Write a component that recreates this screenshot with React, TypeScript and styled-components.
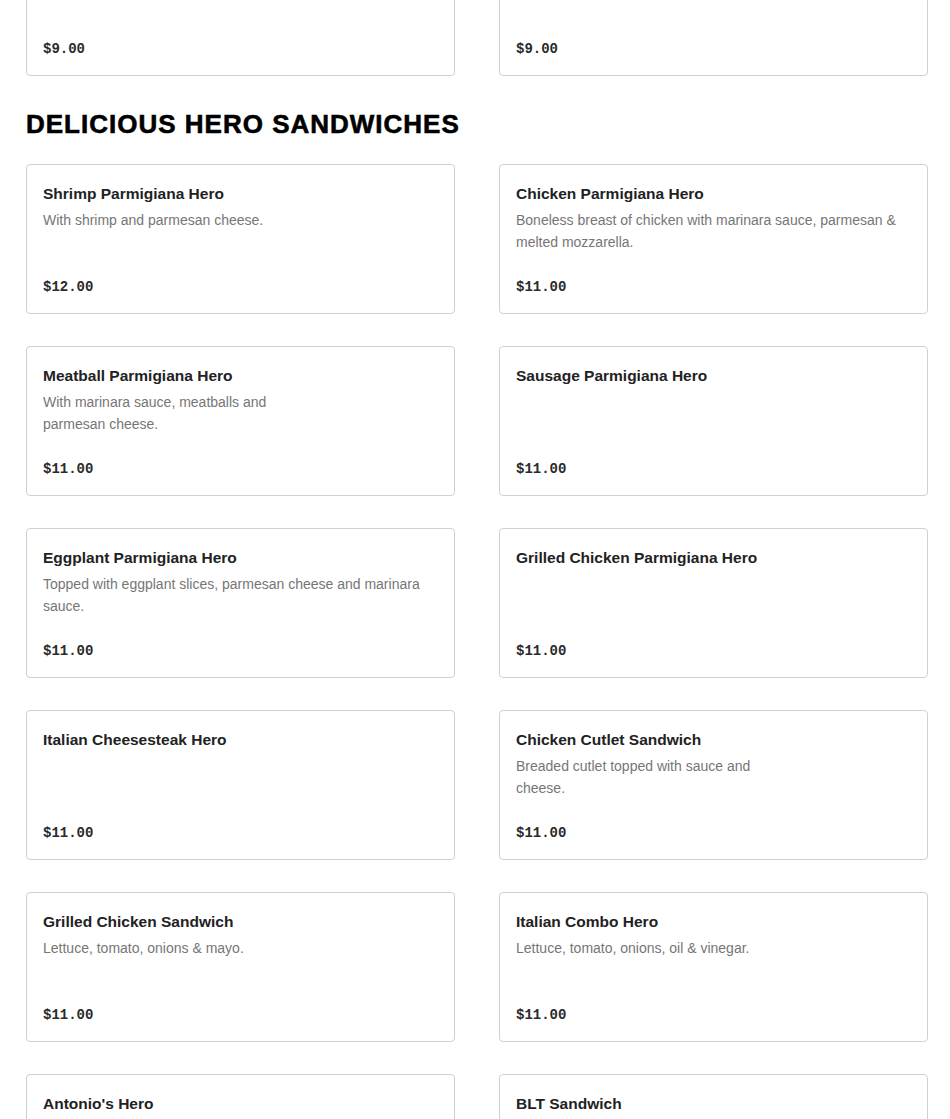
import React from "react";
import styled, { createGlobalStyle } from "styled-components";

interface Item {
  name?: string;
  description?: string;
  price: string;
}

// end of the section above, scrolled mostly out of view
const previous: Item[] = [{ price: "$9.00" }, { price: "$9.00" }];

const heroes: Item[] = [
  {
    name: "Shrimp Parmigiana Hero",
    description: "With shrimp and parmesan cheese.",
    price: "$12.00",
  },
  {
    name: "Chicken Parmigiana Hero",
    description:
      "Boneless breast of chicken with marinara sauce, parmesan & melted mozzarella.",
    price: "$11.00",
  },
  {
    name: "Meatball Parmigiana Hero",
    description: "With marinara sauce, meatballs and\nparmesan cheese.",
    price: "$11.00",
  },
  { name: "Sausage Parmigiana Hero", price: "$11.00" },
  {
    name: "Eggplant Parmigiana Hero",
    description: "Topped with eggplant slices, parmesan cheese and marinara sauce.",
    price: "$11.00",
  },
  { name: "Grilled Chicken Parmigiana Hero", price: "$11.00" },
  { name: "Italian Cheesesteak Hero", price: "$11.00" },
  {
    name: "Chicken Cutlet Sandwich",
    description: "Breaded cutlet topped with sauce and\ncheese.",
    price: "$11.00",
  },
  {
    name: "Grilled Chicken Sandwich",
    description: "Lettuce, tomato, onions & mayo.",
    price: "$11.00",
  },
  {
    name: "Italian Combo Hero",
    description: "Lettuce, tomato, onions, oil & vinegar.",
    price: "$11.00",
  },
  {
    name: "Antonio's Hero",
    description: "Ham, salami, provolone, lettuce, tomato, onions, oil & vinegar.",
    price: "$11.00",
  },
  { name: "BLT Sandwich", description: "Bacon, lettuce & tomato.", price: "$11.00" },
];

const MenuCard: React.FC<{ item: Item }> = ({ item }) => (
  <Card>
    {item.name ? <Name>{item.name}</Name> : null}
    {item.description ? <Desc>{item.description}</Desc> : null}
    <Price>{item.price}</Price>
  </Card>
);

const App: React.FC = () => {
  return (
    <>
      <GlobalStyle />
      <Page>
        <Grid $scrolled>
          {previous.map((item, i) => (
            <MenuCard key={i} item={item} />
          ))}
        </Grid>
        <Heading>Delicious Hero Sandwiches</Heading>
        <Grid>
          {heroes.map((item) => (
            <MenuCard key={item.name} item={item} />
          ))}
        </Grid>
      </Page>
    </>
  );
};

export default App;

const GlobalStyle = createGlobalStyle`
  html, body {
    margin: 0;
    padding: 0;
    background: #ffffff;
    overflow: hidden;
  }
  body {
    font-family: "Liberation Sans", Arial, sans-serif;
  }
`;

const Page = styled.div`
  width: 902px;
  margin-left: 26px;
  height: 1119px;
  overflow: hidden;
`;

const Grid = styled.div<{ $scrolled?: boolean }>`
  display: grid;
  grid-template-columns: 1fr 1fr;
  column-gap: 44px;
  row-gap: 32px;
  margin-top: ${(p) => (p.$scrolled ? "-74px" : "0")};
`;

const Heading = styled.h2`
  margin: 33px 0 25px;
  font-family: "Liberation Sans", Arial, sans-serif;
  font-weight: 900;
  font-size: 26px;
  line-height: 30px;
  letter-spacing: 1px;
  -webkit-text-stroke: 0.6px #000;
  text-transform: uppercase;
  color: #000;
`;

const Card = styled.div`
  box-sizing: border-box;
  height: 150px;
  border: 1px solid #d0d0d0;
  border-radius: 4px;
  padding: 16px;
  display: flex;
  flex-direction: column;
  background: #fff;
`;

const Name = styled.div`
  margin-top: 1px;
  font-size: 15.5px;
  line-height: 24px;
  font-weight: 700;
  color: #222;
`;

const Desc = styled.div`
  margin-top: 3px;
  font-size: 14px;
  line-height: 22px;
  color: #767676;
  white-space: pre-line;
  max-width: 395px;
`;

const Price = styled.div`
  margin-top: auto;
  font-family: "Liberation Mono", "Courier New", monospace;
  font-size: 14px;
  line-height: 20px;
  font-weight: 700;
  color: #2a2a2a;
`;
